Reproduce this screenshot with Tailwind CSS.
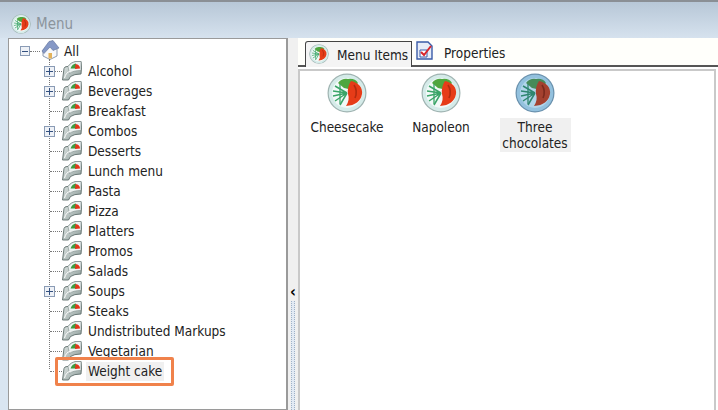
<!DOCTYPE html>
<html lang="en">
<head>
  <meta charset="UTF-8">
  <title>Menu</title>
  <script src="https://cdn.jsdelivr.net/npm/@tailwindcss/browser@4"></script>
</head>
<body class="w-[718px] h-[410px] overflow-hidden bg-[#f3f3f3] font-['DejaVu_Sans_Condensed','Liberation_Sans',sans-serif] text-[13.5px] text-[#222]">
  <svg class="absolute w-0 h-0">
    <linearGradient id="fold" x1="0" y1="0" x2="1" y2="1">
      <stop offset="0" stop-color="#e9eeed"/>
      <stop offset="1" stop-color="#8a9a97"/>
    </linearGradient>
    <symbol id="plate" viewBox="0 0 40 40">
      <circle cx="20" cy="20" r="19.5" fill="#9fb3b1"/>
      <circle cx="20" cy="20" r="18.3" fill="#d5ebe9"/>
      <circle cx="20" cy="20" r="15" fill="#f2f9f8"/>
      <path d="M11 10 Q15 5 21 6 Q28 5 31 10 L26 17 L17 15 Z" fill="#4fa63f"/>
      <path d="M20 20 L8 13 M20 20 L6 18 M20 20 L6 23 M20 20 L8 28 M20 20 L13 32" stroke="#3aa568" stroke-width="1.5" fill="none"/>
      <path d="M13 11 L13 31" stroke="#3aa568" stroke-width="1.3"/>
      <path d="M24 8 Q36 11 35 21 Q33 32 19 33 Q23 27 21 21 Q20 14 24 8 Z" fill="#e63c18"/>
      <path d="M27 12 Q31 18 28 25" stroke="#b32b0f" stroke-width="1.6" fill="none"/>
    </symbol>
    <symbol id="plate-sel" viewBox="0 0 40 40">
      <circle cx="20" cy="20" r="19.5" fill="#6a91ad"/>
      <circle cx="20" cy="20" r="18.3" fill="#93c1de"/>
      <circle cx="20" cy="20" r="15" fill="#b2d5ea"/>
      <path d="M11 10 Q15 5 21 6 Q28 5 31 10 L26 17 L17 15 Z" fill="#468a58"/>
      <path d="M20 20 L8 13 M20 20 L6 18 M20 20 L6 23 M20 20 L8 28 M20 20 L13 32" stroke="#2f8670" stroke-width="1.5" fill="none"/>
      <path d="M13 11 L13 31" stroke="#2f8670" stroke-width="1.3"/>
      <path d="M24 8 Q36 11 35 21 Q33 32 19 33 Q23 27 21 21 Q20 14 24 8 Z" fill="#a4412f"/>
      <path d="M27 12 Q31 18 28 25" stroke="#7a2a1d" stroke-width="1.6" fill="none"/>
    </symbol>
    <symbol id="folder" viewBox="0 0 20 20">
      <path d="M.5 19 L2 7.5 Q2.5 5.5 5 5.5 L6 5.5 Q9 1 14 .5 L19 .5 Q20 7 19 13 Q12 13 8.5 15.5 L6.5 19 Z" fill="url(#fold)" stroke="#5f6e6c" stroke-width=".9"/>
      <path d="M6 5.5 Q9 1 14 .5 L19 .5 L19 9.5 Q11 9.5 7.5 12.5 Z" fill="#eef3f2" stroke="#7d8c8a" stroke-width=".6"/>
      <path d="M8.5 7.5 Q10 3 14 2.5 L14.5 7.5 Z" fill="#3c9c3f"/>
      <path d="M13.5 3 Q18 3.5 18 7.5 L13 8 Z" fill="#e1351a"/>
      <path d="M2.5 17 Q4 11 8 10.5" stroke="#fff" fill="none"/>
    </symbol>
  </svg>

  <!-- title bar -->
  <div class="h-[38px] flex items-center gap-[5px] pl-[11px] pt-[8px] bg-gradient-to-b from-[#b7c7d7] to-[#d6e2ee] border-t-2 border-[#8a8f95]">
    <svg class="w-5 h-5"><use href="#plate"/></svg>
    <span class="text-[15px] text-[#8b949c]">Menu</span>
  </div>

  <div class="flex h-[372px]">
    <div class="w-[8px] bg-[#d9e5f1]"></div>

    <!-- tree -->
    <div class="relative w-[280px] bg-white border border-[#9a9a9a] pt-[2px] border-r-2">
      <div class="absolute left-[40px] top-[20px] h-[310px] border-l border-dotted border-[#777]"></div>
      <div class="flex items-center h-5 pl-[11px]">
        <span class="w-[10px] h-[10px] border border-[#8a9bb5] bg-[#eef1f6] flex items-center justify-center"><span class="w-[6px] h-px bg-[#33507f]"></span></span>
        <span class="w-[10px] border-t border-dotted border-[#777]"></span>
        <svg class="w-5 h-5 -mt-[2px]" viewBox="0 0 20 20">
          <path d="M3 10 L3 16 L10 19.5 L17 16 L17 9 L10 3 Z" fill="#f7f8fa" stroke="#8d9ab0"/>
          <path d="M2 11 L9 1.5 L13 .5 L19 8 L13 10.5 L10 7 L4 13.5 Z" fill="#8598c6" stroke="#5f7099" stroke-width=".6"/>
          <path d="M8.5 13 h3.5 v5.5 h-3.5 Z" fill="#e3b25a"/>
        </svg>
        <span class="ml-[4px]">All</span>
      </div>
      <div class="flex items-center h-5 pl-[35px]">
        <span class="w-[11px] h-[11px] border border-[#8a9bb5] bg-[#eef1f6] relative flex items-center justify-center"><span class="w-[7px] h-px bg-[#33507f]"></span><span class="absolute h-[7px] w-px bg-[#33507f]"></span></span>
        <span class="w-[7px] border-t border-dotted border-[#777]"></span>
        <svg class="w-5 h-5 shrink-0"><use href="#folder"/></svg>
        <span class="ml-[6px]">Alcohol</span>
      </div>
      <div class="flex items-center h-5 pl-[35px]">
        <span class="w-[11px] h-[11px] border border-[#8a9bb5] bg-[#eef1f6] relative flex items-center justify-center"><span class="w-[7px] h-px bg-[#33507f]"></span><span class="absolute h-[7px] w-px bg-[#33507f]"></span></span>
        <span class="w-[7px] border-t border-dotted border-[#777]"></span>
        <svg class="w-5 h-5 shrink-0"><use href="#folder"/></svg>
        <span class="ml-[6px]">Beverages</span>
      </div>
      <div class="flex items-center h-5 pl-[41px]">
        <span class="w-[12px] border-t border-dotted border-[#777]"></span>
        <svg class="w-5 h-5 shrink-0"><use href="#folder"/></svg>
        <span class="ml-[6px]">Breakfast</span>
      </div>
      <div class="flex items-center h-5 pl-[35px]">
        <span class="w-[11px] h-[11px] border border-[#8a9bb5] bg-[#eef1f6] relative flex items-center justify-center"><span class="w-[7px] h-px bg-[#33507f]"></span><span class="absolute h-[7px] w-px bg-[#33507f]"></span></span>
        <span class="w-[7px] border-t border-dotted border-[#777]"></span>
        <svg class="w-5 h-5 shrink-0"><use href="#folder"/></svg>
        <span class="ml-[6px]">Combos</span>
      </div>
      <div class="flex items-center h-5 pl-[41px]">
        <span class="w-[12px] border-t border-dotted border-[#777]"></span>
        <svg class="w-5 h-5 shrink-0"><use href="#folder"/></svg>
        <span class="ml-[6px]">Desserts</span>
      </div>
      <div class="flex items-center h-5 pl-[41px]">
        <span class="w-[12px] border-t border-dotted border-[#777]"></span>
        <svg class="w-5 h-5 shrink-0"><use href="#folder"/></svg>
        <span class="ml-[6px]">Lunch menu</span>
      </div>
      <div class="flex items-center h-5 pl-[41px]">
        <span class="w-[12px] border-t border-dotted border-[#777]"></span>
        <svg class="w-5 h-5 shrink-0"><use href="#folder"/></svg>
        <span class="ml-[6px]">Pasta</span>
      </div>
      <div class="flex items-center h-5 pl-[41px]">
        <span class="w-[12px] border-t border-dotted border-[#777]"></span>
        <svg class="w-5 h-5 shrink-0"><use href="#folder"/></svg>
        <span class="ml-[6px]">Pizza</span>
      </div>
      <div class="flex items-center h-5 pl-[41px]">
        <span class="w-[12px] border-t border-dotted border-[#777]"></span>
        <svg class="w-5 h-5 shrink-0"><use href="#folder"/></svg>
        <span class="ml-[6px]">Platters</span>
      </div>
      <div class="flex items-center h-5 pl-[41px]">
        <span class="w-[12px] border-t border-dotted border-[#777]"></span>
        <svg class="w-5 h-5 shrink-0"><use href="#folder"/></svg>
        <span class="ml-[6px]">Promos</span>
      </div>
      <div class="flex items-center h-5 pl-[41px]">
        <span class="w-[12px] border-t border-dotted border-[#777]"></span>
        <svg class="w-5 h-5 shrink-0"><use href="#folder"/></svg>
        <span class="ml-[6px]">Salads</span>
      </div>
      <div class="flex items-center h-5 pl-[35px]">
        <span class="w-[11px] h-[11px] border border-[#8a9bb5] bg-[#eef1f6] relative flex items-center justify-center"><span class="w-[7px] h-px bg-[#33507f]"></span><span class="absolute h-[7px] w-px bg-[#33507f]"></span></span>
        <span class="w-[7px] border-t border-dotted border-[#777]"></span>
        <svg class="w-5 h-5 shrink-0"><use href="#folder"/></svg>
        <span class="ml-[6px]">Soups</span>
      </div>
      <div class="flex items-center h-5 pl-[41px]">
        <span class="w-[12px] border-t border-dotted border-[#777]"></span>
        <svg class="w-5 h-5 shrink-0"><use href="#folder"/></svg>
        <span class="ml-[6px]">Steaks</span>
      </div>
      <div class="flex items-center h-5 pl-[41px]">
        <span class="w-[12px] border-t border-dotted border-[#777]"></span>
        <svg class="w-5 h-5 shrink-0"><use href="#folder"/></svg>
        <span class="ml-[6px]">Undistributed Markups</span>
      </div>
      <div class="flex items-center h-5 pl-[41px]">
        <span class="w-[12px] border-t border-dotted border-[#777]"></span>
        <svg class="w-5 h-5 shrink-0"><use href="#folder"/></svg>
        <span class="ml-[6px]">Vegetarian</span>
      </div>
      <div class="flex items-center h-5 pl-[41px]">
        <span class="w-[12px] border-t border-dotted border-[#777]"></span>
        <svg class="w-5 h-5 shrink-0"><use href="#folder"/></svg>
        <span class="ml-[4px] px-[2px] h-[19px] flex items-center bg-[#f0f0f0]">Weight cake</span>
      </div>
      <!-- orange callout -->
      <div class="absolute left-[46px] top-[318px] w-[119px] h-[29px] border-[3px] border-[#f0824b] rounded-[2px]"></div>
    </div>

    <!-- splitter -->
    <div class="w-[10px] bg-[#f0f0f0] flex flex-col items-center pt-[247px]">
      <span class="text-[16px] leading-[14px] font-bold text-black">‹</span>
      <div class="mt-[2px] flex-1 w-[4px] bg-[#e2eaf4] border-x border-dotted border-[#9fb1c6]"></div>
    </div>

    <!-- right panel -->
    <div class="flex-1 flex flex-col bg-white">
      <div class="h-[29px] flex items-end pl-[7px] border-b-2 border-[#555] bg-[#fffffb]">
        <div class="h-[26px] w-[107px] -mb-[2px] flex items-center gap-[8px] pl-[3px] border-x border-t border-[#444] bg-[#f4f4f4] rounded-tl-[3px]">
          <svg class="w-5 h-5 -mt-[1px]"><use href="#plate"/></svg>
          <span class="pt-[2px]">Menu Items</span>
        </div>
        <div class="h-[26px] flex items-center pl-[4px] gap-[11px]">
          <svg class="w-[17px] h-[20px] -mt-[2px]" viewBox="0 0 17 20">
            <path d="M1 1 H12 L16 5 V18 H1 Z" fill="#e7edf8" stroke="#3b5ca8" stroke-width="1.4"/>
            <path d="M4 9 H11 V16 H4 Z" fill="#fff" stroke="#3b5ca8"/>
            <path d="M5 11 L8 14 L15 5" stroke="#d8262c" stroke-width="2" fill="none"/>
          </svg>
          <span class="pt-[2px]">Properties</span>
        </div>
      </div>
      <div class="flex-1 border-l-2 border-t-2 border-r-2 mt-[2px] mr-[2px] border-[#c9c9c9] flex items-start pt-[2px] bg-white">
        <div class="w-[94px] flex flex-col items-center gap-[5px]">
          <svg class="w-10 h-10"><use href="#plate"/></svg>
          <span class="leading-[18px]">Cheesecake</span>
        </div>
        <div class="w-[94px] flex flex-col items-center gap-[5px]">
          <svg class="w-10 h-10"><use href="#plate"/></svg>
          <span class="leading-[18px]">Napoleon</span>
        </div>
        <div class="w-[94px] flex flex-col items-center gap-[5px]">
          <svg class="w-10 h-10"><use href="#plate-sel"/></svg>
          <span class="w-[71px] leading-[16px] py-[1px] text-center bg-[#f0f0f0]">Three chocolates</span>
        </div>
      </div>
    </div>
  </div>
</body>
</html>
